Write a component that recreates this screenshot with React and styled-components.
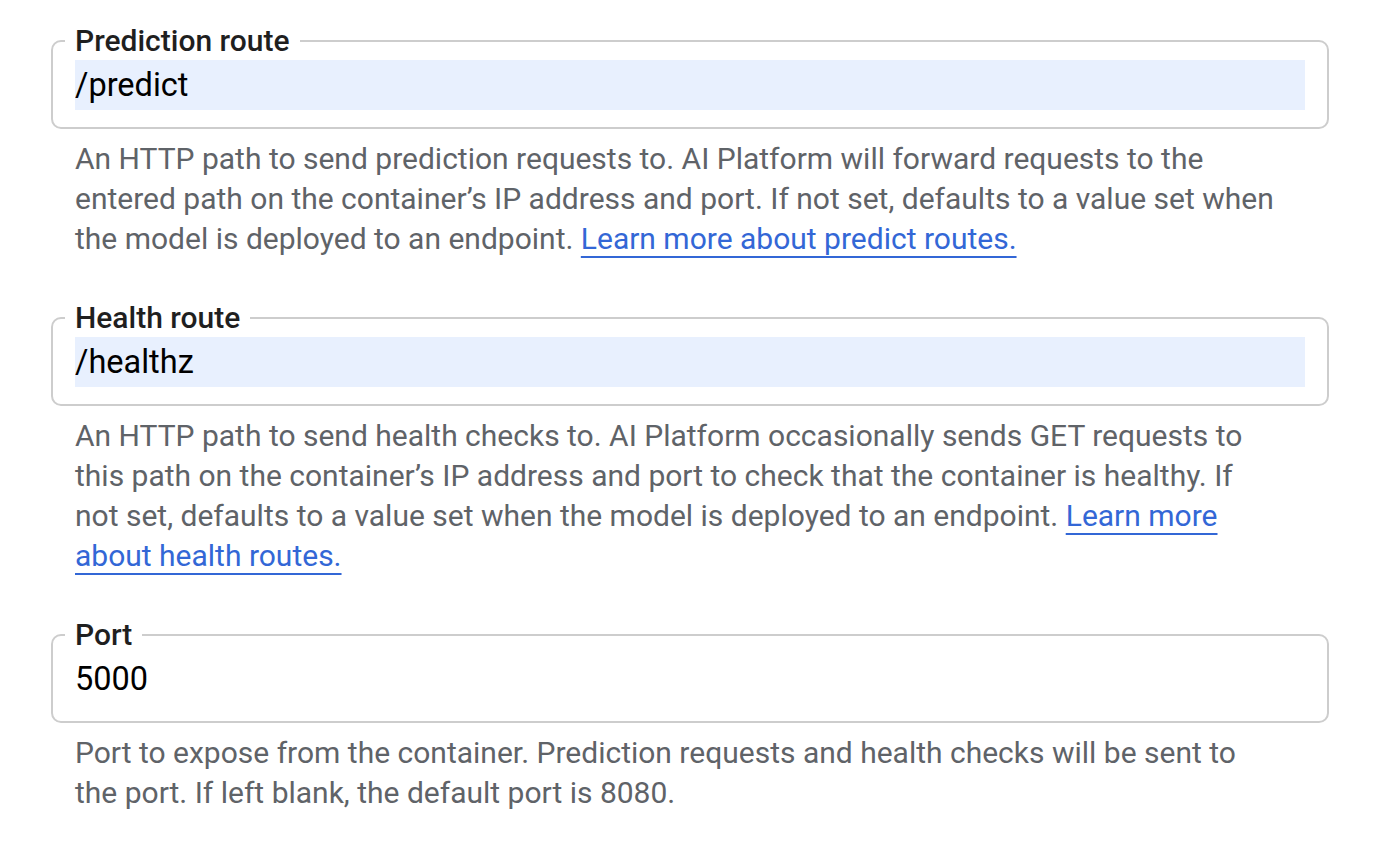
import React from "react";
import styled, { createGlobalStyle } from "styled-components";

const Global = createGlobalStyle`
  body {
    margin: 0;
    background: #fff;
    font-family: Roboto, "Liberation Sans", Arial, sans-serif;
  }
`;

const Page = styled.div`
  padding: 26px 0 0 51px;
  width: 1278px;
  display: flex;
  flex-direction: column;
  gap: 44px;
`;

const Field = styled.div`
  display: flex;
  flex-direction: column;
`;

const Box = styled.fieldset`
  margin: 0;
  padding: 0 22px 17px 22px;
  border: 2px solid #cdcdcd;
  border-radius: 10px;
  min-width: 0;
`;

const Label = styled.legend`
  margin-left: -10px;
  padding: 0 10px;
  font-size: 30px;
  line-height: 30px;
  font-weight: 500;
  color: #1f1f1f;
`;

const Input = styled.input`
  display: block;
  width: 100%;
  box-sizing: border-box;
  height: 50px;
  margin-top: 4px;
  padding: 0;
  border: none;
  outline: none;
  font-family: inherit;
  font-size: 32.5px;
  color: #000;
  background: ${(p) => (p.$filled ? "#e8f0fe" : "transparent")};
`;

const Help = styled.p`
  margin: 10px 0 0 24px;
  max-width: 1200px;
  font-size: 30px;
  line-height: 40px;
  color: #5f6368;
`;

const More = styled.a`
  color: #3367d6;
  text-decoration: underline;
  text-decoration-thickness: 2px;
  text-underline-offset: 7px;
`;

const fields = [
  {
    label: "Prediction route",
    value: "/predict",
    filled: true,
    help: "An HTTP path to send prediction requests to. AI Platform will forward requests to the entered path on the container\u2019s IP address and port. If not set, defaults to a value set when the model is deployed to an endpoint.",
    link: "Learn more about predict routes.",
  },
  {
    label: "Health route",
    value: "/healthz",
    filled: true,
    help: "An HTTP path to send health checks to. AI Platform occasionally sends GET requests to this path on the container\u2019s IP address and port to check that the container is healthy. If not set, defaults to a value set when the model is deployed to an endpoint.",
    link: "Learn more about health routes.",
  },
  {
    label: "Port",
    value: "5000",
    filled: false,
    help: "Port to expose from the container. Prediction requests and health checks will be sent to the port. If left blank, the default port is 8080.",
  },
];

export default function App() {
  return (
    <>
      <Global />
      <Page>
        {fields.map((f) => (
          <Field key={f.label}>
            <Box>
              <Label>{f.label}</Label>
              <Input $filled={f.filled} defaultValue={f.value} />
            </Box>
            <Help>
              {f.help}
              {f.link && (
                <>
                  {" "}
                  <More href="#">{f.link}</More>
                </>
              )}
            </Help>
          </Field>
        ))}
      </Page>
    </>
  );
}
